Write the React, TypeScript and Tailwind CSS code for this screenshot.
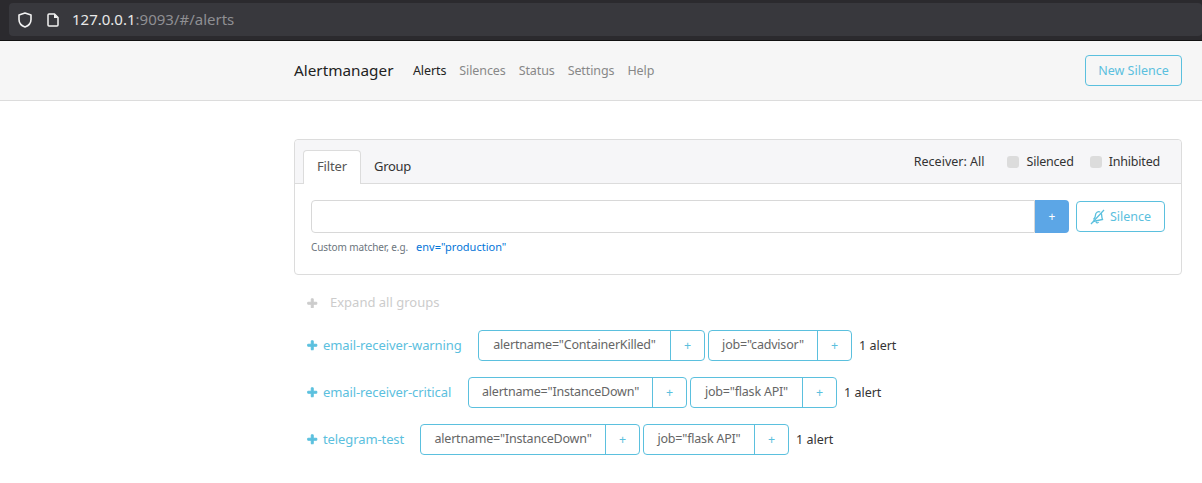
import { FaPlus } from "react-icons/fa";

const font = "[font-family:'Noto_Sans','Open_Sans',sans-serif]";

const groups = [
  {
    name: "email-receiver-warning",
    nameWidth: "w-[155px]",
    labels: [
      { text: 'alertname="ContainerKilled"', width: "w-[192px]" },
      { text: 'job="cadvisor"', width: "w-[109px]" },
    ],
  },
  {
    name: "email-receiver-critical",
    nameWidth: "w-[145px]",
    labels: [
      { text: 'alertname="InstanceDown"', width: "w-[184px]" },
      { text: 'job="flask API"', width: "w-[112px]" },
    ],
  },
  {
    name: "telegram-test",
    nameWidth: "w-[97px]",
    labels: [
      { text: 'alertname="InstanceDown"', width: "w-[185px]" },
      { text: 'job="flask API"', width: "w-[111px]" },
    ],
  },
];

function LabelButton({ text, width }: { text: string; width: string }) {
  return (
    <div className="flex h-[31px] rounded-[4px] border border-[#5bc0de] bg-white text-[12.5px] tracking-[-0.2px] text-[#666]">
      <span className={`flex items-center justify-center border-r border-[#5bc0de] whitespace-nowrap ${width}`}>
        {text}
      </span>
      <span className="flex w-[33px] items-center justify-center pt-[1px] text-[#5bc0de]">+</span>
    </div>
  );
}

export default function App() {
  return (
    <div className={`h-[483px] w-[1202px] overflow-hidden bg-white text-[#333] ${font}`}>
      {/* browser chrome */}
      <div className="h-[41px] border-b border-[#111] bg-[#2b2a2e] pt-[3px] pl-[9px]">
        <div className="flex h-[33px] items-center rounded-[4px] bg-[#38383d] pl-[9px]">
          <svg width="14" height="16" viewBox="0 0 14 16" fill="none">
            <path d="M7 1 L13 3 V7.5 C13 11 10.5 13.8 7 15 C3.5 13.8 1 11 1 7.5 V3 Z" stroke="#f2f2f2" strokeWidth="1.6" strokeLinejoin="round" />
          </svg>
          <svg width="12" height="14" viewBox="0 0 12 14" fill="none" className="ml-[15px]">
            <path d="M2 1 H7.5 L11 4.5 V12 a1 1 0 0 1 -1 1 H2 a1 1 0 0 1 -1 -1 V2 a1 1 0 0 1 1 -1 Z" stroke="#f2f2f2" strokeWidth="1.5" strokeLinejoin="round" />
            <path d="M7 1 V5 H11" fill="#f2f2f2" />
          </svg>
          <span className="ml-[13px] text-[15px] text-[#e8e8e8]">
            127.0.0.1<span className="text-[#8f8f93]">:9093/#/alerts</span>
          </span>
        </div>
      </div>

      {/* navbar */}
      <div className="flex h-[60px] items-center justify-between border-b border-[#dcdcdc] bg-[#f6f6f6] pr-[20px] pl-[294px]">
        <div className="flex items-center">
          <span className="text-[15.3px] text-[#222]">Alertmanager</span>
          <nav className="ml-[19.5px] flex gap-[13px] pt-[1px] text-[12.5px] tracking-[-0.1px] text-[#888]">
            <span className="text-[#222]">Alerts</span>
            <span>Silences</span>
            <span>Status</span>
            <span>Settings</span>
            <span>Help</span>
          </nav>
        </div>
        <button className="h-[31px] w-[97px] rounded-[4px] border border-[#5bc0de] pt-[1px] text-[12.5px] text-[#5bc0de]">
          New Silence
        </button>
      </div>

      <div className="pt-[38px] pr-[20px] pl-[294px]">
        {/* filter card */}
        <div className="h-[136px] rounded-[4px] border border-[#dcdcdc]">
          <div className="flex h-[44px] items-end justify-between rounded-t-[4px] border-b border-[#dcdcdc] bg-[#f6f6f8] pl-[8px]">
            <div className="flex text-[13px] tracking-[-0.1px]">
              <span className="-mb-px flex h-[34px] w-[58px] items-center justify-center rounded-t-[4px] border border-b-0 border-[#dcdcdc] bg-white pb-[2px] text-[#555]">
                Filter
              </span>
              <span className="flex h-[33px] w-[63px] items-center justify-center tracking-[-0.3px] text-[#333]">Group</span>
            </div>
            <div className="flex h-[43px] items-center pt-[1px] pr-[21px] text-[12.5px] tracking-[-0.2px] text-[#333]">
              <span className="tracking-normal">Receiver: All</span>
              <span className="ml-[23px] h-[12px] w-[12px] rounded-[3px] bg-[#dcdcdc]" />
              <span className="ml-[7px]">Silenced</span>
              <span className="ml-[16px] h-[12px] w-[12px] rounded-[3px] bg-[#dcdcdc]" />
              <span className="ml-[7px]">Inhibited</span>
            </div>
          </div>
          <div className="px-[16px] pt-[16px]">
            <div className="flex items-center">
              <div className="h-[33px] flex-1 rounded-l-[4px] border border-[#d8d8d8] bg-white" />
              <div className="flex h-[33px] w-[34px] items-center justify-center rounded-r-[4px] bg-[#5ca6e6] text-[12px] text-white">+</div>
              <button className="ml-[7px] flex h-[31px] w-[89px] items-center justify-center gap-[5px] rounded-[4px] border border-[#5bc0de] pt-[1px] text-[12.5px] text-[#5bc0de]">
                <svg width="15" height="16" viewBox="0 0 15 16" fill="none" stroke="#5bc0de" strokeWidth="1.3">
                  <path d="M1 15 L14 1" />
                  <path d="M3.5 10.5 C5 9 5.5 7.5 5.5 6 C5.5 3.5 8 2 10.2 3" />
                  <path d="M11.3 4.3 C12 6.5 11.5 8.5 12.5 10.5 L3 12.5" />
                  <path d="M6 12.5 C6.3 14 7.8 14.3 8.6 13" />
                </svg>
                Silence
              </button>
            </div>
            <div className="mt-[7px] flex text-[10px] leading-[14px] tracking-[-0.1px] text-[#6c757d]">
              <span>Custom matcher, e.g.</span>
              <span className="ml-[8px] text-[11px] tracking-normal text-[#0275d8]">env="production"</span>
            </div>
          </div>
        </div>

        {/* groups */}
        <div className="mt-[19px] flex h-[18px] items-center pl-[13px] text-[13px] text-[#ccc]">
          <FaPlus className="text-[10.5px] [stroke-width:50]" />
          <span className="ml-[12.5px]">Expand all groups</span>
        </div>

        <div className="mt-[18px] flex flex-col gap-[16px]">
          {groups.map((group) => (
            <div key={group.name} className="flex items-center pl-[13px]">
              <FaPlus className="text-[10.5px] text-[#5bc0de] [stroke-width:50]" />
              <span className={`ml-[5.5px] pt-[1px] text-[13px] tracking-[-0.1px] whitespace-nowrap text-[#5bc0de] ${group.nameWidth}`}>{group.name}</span>
              <div className="flex gap-[3px]">
                {group.labels.map((label) => (
                  <LabelButton key={label.text} text={label.text} width={label.width} />
                ))}
              </div>
              <span className="ml-[7px] pt-[1px] text-[12.5px] text-[#333]">1 alert</span>
            </div>
          ))}
        </div>
      </div>
    </div>
  );
}
